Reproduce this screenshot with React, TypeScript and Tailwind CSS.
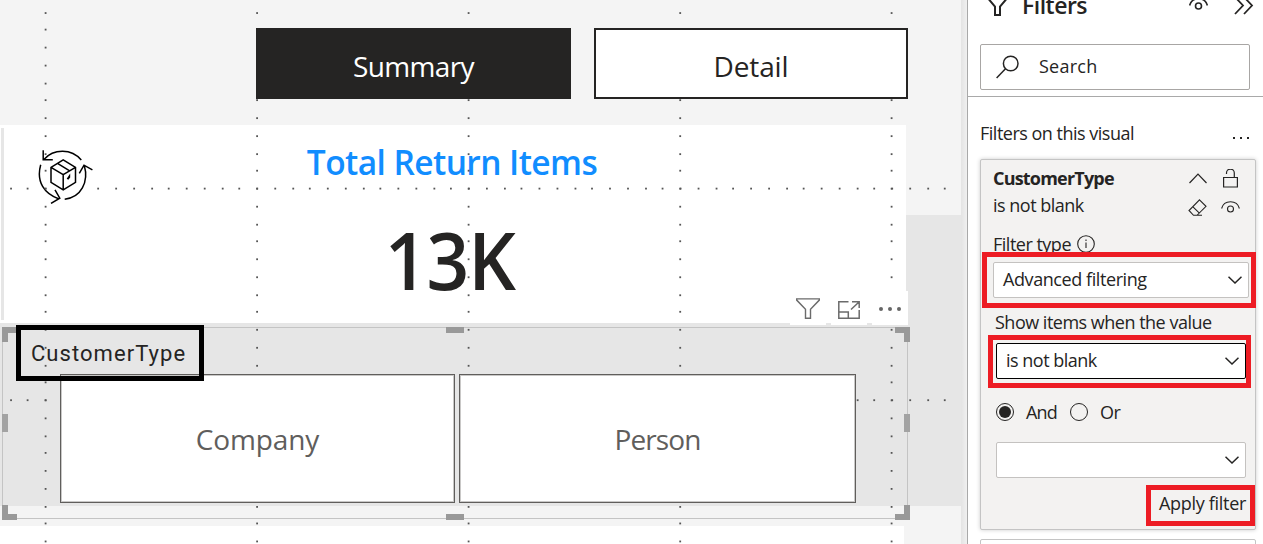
import React from "react";

const PERIOD = 70.55;
const spread = (start: number, end: number) =>
  Array.from({ length: 16 }, (_, k) => [0, 18, 36, 54].map((d) => start + PERIOD * (k - 1) + d))
    .flat()
    .filter((v) => v > 0 && v < end);

const dotRows = spread(29.7, 544);
const dotColumns = [45.7, 257.2, 468.7, 680.3, 891.7];
const dotSteps = spread(27.7, 950).filter((x) => x < 60 || x > 90);

function Dot({ x, y }: { x: number; y: number }) {
  return <rect x={x - 1} y={y - 1} width="1.8" height="1.8" fill="#555" />;
}

function GridDots() {
  return (
    <svg className="pointer-events-none absolute inset-0 z-10" width="961" height="544">
      {dotColumns.map((x) => dotRows.map((y) => <Dot key={`${x}-${y}`} x={x} y={y} />))}
      {[188.7, 400.3].map((y) => dotSteps.map((x) => <Dot key={`h${x}-${y}`} x={x} y={y} />))}
    </svg>
  );
}

function ReturnBoxIcon() {
  return (
    <svg width="56" height="56" viewBox="0.5 0 56 56" fill="none" stroke="#000" strokeWidth="1.5">
      <path d="M44.8 12A25 25 0 0 0 7.3 11.5M6.7 2.3v9.4h9.6" />
      <path d="M4.2 16.8C-.6 34 8 46 22.5 51M14.5 55.4l8.8-5.2-4.8-8.4" />
      <path d="M28.2 51.2C44.5 49.5 52.5 34 47.8 17.5M42.8 25.4l4.7-8.2 8.4 4.7" />
      <path d="M26.7 11.8l12.3 7.5v15l-12.3 7.5-12.2-7.5v-15zM14.5 19.3l12.2 7.3 12.3-7.3M26.7 26.6v15.2M21 15.3l12.2 7.6" />
      <path d="M31 31.2l1.7-2v-.5l-1.7 2.5" strokeWidth="2" />
    </svg>
  );
}

function Chevron({ up = false }: { up?: boolean }) {
  return up ? (
    <svg width="18" height="11" viewBox="0 0 18 11" fill="none" stroke="#252423" strokeWidth="1.2">
      <path d="M.5 10 9 1.2 17.5 10" />
    </svg>
  ) : (
    <svg width="14" height="8" viewBox="0 0 14 8" fill="none" stroke="#252423" strokeWidth="1.5">
      <path d="M.5.7 7 7 13.5.7" />
    </svg>
  );
}

function Eye({ bold = false }: { bold?: boolean }) {
  return (
    <svg width="19" height="12" viewBox="0 0 19 12" fill="none" stroke="#252423" strokeWidth={bold ? 1.6 : 1.1}>
      <path d="M.6 7.5C3-1.5 16-1.5 18.4 7.5" />
      <circle cx="9.5" cy="8" r="3" />
    </svg>
  );
}

function Select({ label, className }: { label?: string; className: string }) {
  return (
    <div className={`flex h-9 items-center justify-between rounded-[2px] border bg-white ${className}`}>
      <span className="pb-px">{label}</span>
      <Chevron />
    </div>
  );
}

function Handles() {
  return (
    <>
      <i className="absolute -left-px -top-px h-[15px] w-[15px] border-l-[6px] border-t-[6px] border-[#999]" />
      <i className="absolute -right-[3px] -top-px h-[15px] w-[15px] border-r-[6px] border-t-[6px] border-[#999]" />
      <i className="absolute -bottom-[2px] -left-px h-[15px] w-[15px] border-b-[6px] border-l-[6px] border-[#999]" />
      <i className="absolute -bottom-[2px] -right-[3px] h-[15px] w-[15px] border-b-[6px] border-r-[6px] border-[#999]" />
      <i className="absolute -top-px left-[443px] h-[6px] w-[18px] bg-[#999]" />
      <i className="absolute -bottom-[2px] left-[443px] h-[6px] w-[18px] bg-[#999]" />
      <i className="absolute -left-px top-[86px] h-[18px] w-[6px] bg-[#a3a3a3]" />
      <i className="absolute -right-[3px] top-[86px] h-[18px] w-[6px] bg-[#a3a3a3]" />
    </>
  );
}

function VisualToolbar() {
  return (
    <div className="absolute left-[790px] top-[291px] z-20 flex gap-[5px]">
      <div className="flex h-[34px] w-9 justify-center bg-white pt-[7px]">
        <svg width="24" height="21" viewBox="0 0 24 21" fill="none" stroke="#6b6b6b" strokeWidth="1.4">
          <path d="M.7.9h22.6v1.2L14.5 11.3v9H9.5v-9L.7 2.1z" />
        </svg>
      </div>
      <div className="flex h-[34px] w-9 justify-center bg-white pt-[10px]">
        <svg width="22" height="18" viewBox="0 0 22 18" fill="none" stroke="#6b6b6b" strokeWidth="1.5">
          <path d="M10.5.8H.8v16.4h20.4V9M14 .8h7.2V7M21 1 13 8.5M.8 11h9.5v6.2" />
        </svg>
      </div>
      <div className="flex h-[34px] w-9 items-center justify-center gap-[5px] bg-white pt-px">
        <i className="h-1 w-1 rounded-full bg-[#666]" />
        <i className="h-1 w-1 rounded-full bg-[#666]" />
        <i className="h-1 w-1 rounded-full bg-[#666]" />
      </div>
    </div>
  );
}

function ReportCanvas() {
  return (
    <main className="relative flex h-full w-[961px] shrink-0 flex-col overflow-hidden bg-[linear-gradient(to_bottom,#f4f4f4_215px,#e6e6e6_215px,#e6e6e6_506px,#f4f4f4_506px)]">
      <GridDots />
      <div className="relative z-20 ml-64 mt-7 flex gap-[23px] text-[28px] text-[#252423]">
        <button className="h-[71px] w-[315px] bg-[#252423] pt-1 leading-none tracking-[-0.65px] text-white">Summary</button>
        <button className="h-[71px] w-[314px] border-2 border-[#252423] bg-white pt-1 leading-none tracking-[-0.1px]">Detail</button>
      </div>

      <section className="mt-[26px] flex h-[198px] w-[906px] shrink-0 bg-white">
        <div className="ml-px mt-[3px] h-[192px] w-[3px] bg-[#e6e6e6]" />
        <div className="ml-[33px] mt-[23px] h-14 w-14">
          <ReturnBoxIcon />
        </div>
        <div className="flex w-[718px] flex-col items-center">
          <h1 className="mt-[13px] text-[33.5px] font-semibold leading-[48px] tracking-[-0.58px] text-[#118dff]">Total Return Items</h1>
          <div className="mt-[25px] scale-x-[0.935] pr-[4px] text-[80px] font-semibold leading-[96px] tracking-[-1px] text-[#252423]">13K</div>
        </div>
      </section>
      <VisualToolbar />

      <section className="relative ml-[2px] mt-1 h-[192px] w-[906px] shrink-0 border border-[#c4c4c4]">
        <Handles />
        <div className="relative z-30 ml-[13px] -mt-[3px] flex h-14 w-[188px] items-center border-[5px] border-black pl-[10px] font-['Roboto'] text-[22px] tracking-[1.05px] text-[#252423]">
          CustomerType
        </div>
        <div className="relative z-20 -mt-[7px] ml-[57px] flex gap-1 text-[28px] leading-none text-[#605e5c]">
          <div className="flex h-[129px] w-[395px] items-center justify-center border border-[#605e5c] bg-white tracking-[-0.1px] shadow-[inset_0_0_0_1px_#c9c8c7]">Company</div>
          <div className="flex h-[129px] w-[397px] items-center justify-center border border-[#605e5c] bg-white tracking-[-0.9px] shadow-[inset_0_0_0_1px_#c9c8c7]">Person</div>
        </div>
      </section>
      <div className="mt-[7px] h-[18px] w-[904px] shrink-0 bg-white" />
    </main>
  );
}

function FiltersPane() {
  return (
    <aside className="flex h-full w-[296px] shrink-0 flex-col overflow-hidden border-l border-[#a9a9a9] bg-white">
      <header className="flex h-[43px] shrink-0 items-start pl-5">
        <svg className="mt-[-3px]" width="20" height="20" viewBox="0 0 20 20" fill="none" stroke="#252423" strokeWidth="2">
          <path d="M1 1h17v1.5L12 9.5V18H7V9.5L1 2.5z" />
        </svg>
        <h2 className="ml-[14px] mt-[-11px] w-[140px] text-[23px] font-semibold leading-[32px] tracking-[-0.5px]">Filters</h2>
        <div className="ml-[27px] mt-[-2px]">
          <Eye bold />
        </div>
        <svg className="ml-[26px] mt-[-4px]" width="20" height="20" viewBox="0 0 20 20" fill="none" stroke="#252423" strokeWidth="1.8">
          <path d="M1 1l8 8.5L1 18M10 1l8 8.5-8 8.5" />
        </svg>
      </header>

      <div className="ml-3 mt-px flex h-[46px] w-[270px] shrink-0 items-center rounded-[2px] border border-[#a8a6a4] pl-[15px]">
        <svg width="23" height="24" viewBox="0 0 23 24" fill="none" stroke="#252423" strokeWidth="1.5">
          <circle cx="14.7" cy="8.5" r="7.3" />
          <path d="M9.5 13.8.6 23" />
        </svg>
        <span className="ml-5 pb-0.5 tracking-[0.25px]">Search</span>
      </div>
      <div className="mt-1.5 h-px shrink-0 bg-[#a9a9a9]" />

      <div className="ml-3 mt-[25px] flex h-6 w-[270px] shrink-0 items-center justify-between">
        <span className="pb-[2px] tracking-[-0.5px]">Filters on this visual</span>
        <span className="flex gap-[5px] pt-2">
          <i className="h-[2px] w-[2px] bg-[#252423]" />
          <i className="h-[2px] w-[2px] bg-[#252423]" />
          <i className="mr-px h-[2px] w-[2px] bg-[#252423]" />
        </span>
      </div>

      <section className="relative ml-3 mt-[13px] flex h-[371px] w-[276px] shrink-0 flex-col rounded-[2px] border border-[#c4c4c4] bg-[#f3f2f1] tracking-[-0.5px] shadow-[0_0_4px_rgba(0,0,0,0.2)]">
        <div className="ml-3 mr-[17px] mt-[5px] flex h-[27px] items-center">
          <b className="flex-1 tracking-[-0.8px]">CustomerType</b>
          <Chevron up />
          <svg className="ml-4" width="15" height="19" viewBox="0 0 15 19" fill="none" stroke="#252423" strokeWidth="1.2">
            <path d="M.6 8.5h13.8V18H.6zM3.5 5V4a3.9 3.9 0 0 1 7.8 0v4.5" />
          </svg>
        </div>
        <div className="ml-3 mr-[15px] flex h-[27px] items-center">
          <span className="flex-1">is not blank</span>
          <svg className="mt-1" width="19" height="17" viewBox="0 0 19 17" fill="none" stroke="#252423" strokeWidth="1.1">
            <path d="M11.5.8l6.5 6.5-9 9H5.5L1 11.5zM4.7 7.6l6.7 6.5M5.5 16.3H14" />
          </svg>
          <span className="ml-[14px] mt-0.5">
            <Eye />
          </span>
        </div>
        <div className="ml-3 mt-[13px] flex h-6 items-center">
          <span>Filter type</span>
          <svg className="ml-1.5" width="18" height="18" viewBox="0 0 18 18" fill="none" stroke="#252423" strokeWidth="1.1">
            <circle cx="9" cy="9" r="8.3" />
            <path d="M9 7.5V13M9 4.5V6" />
          </svg>
        </div>
        <div className="relative z-10 ml-px mt-[-4px] h-14 w-[274px] shrink-0 border-[5px] border-[#ed1c24] pl-[6px] pt-[5px] tracking-[-0.42px]">
          <Select label="Advanced filtering" className="w-64 border-[#c4c2c0] pl-[9px] pr-[6px]" />
        </div>
        <div className="ml-[14px] mt-[2px] flex h-[25px] items-center">Show items when the value</div>
        <div className="ml-[7px] h-[53px] w-[263px] shrink-0 border-[5px] border-[#ed1c24] pl-[3px] pt-[3px]">
          <Select label="is not blank" className="w-[250px] border-black pl-[9px] pr-[6px]" />
        </div>
        <div className="ml-[15px] mt-3 flex h-6 items-center">
          <span className="flex h-[18px] w-[18px] items-center justify-center rounded-full border border-[#252423]">
            <i className="h-3 w-3 rounded-full bg-[#252423]" />
          </span>
          <span className="ml-3 w-8 tracking-[-0.8px]">And</span>
          <span className="ml-3 h-[18px] w-[18px] rounded-full border border-[#252423]" />
          <span className="ml-3">Or</span>
        </div>
        <Select className="ml-[15px] mt-[18px] w-[250px] shrink-0 border-[#c4c2c0] pl-[9px] pr-[6px]" />
        <div className="ml-[165px] mt-[7px] flex h-[41px] w-[109px] shrink-0 items-center justify-end whitespace-nowrap border-[5px] border-[#ed1c24] pb-[5px] pr-1 tracking-[-0.3px]">
          Apply filter
        </div>
      </section>
      <div className="ml-3 mt-[9px] h-10 w-[276px] shrink-0 rounded-[2px] border border-[#c4c4c4] bg-white" />
    </aside>
  );
}

export default function App() {
  return (
    <div className="flex h-[544px] w-[1263px] overflow-hidden bg-white font-['Open_Sans','Noto_Sans',sans-serif] text-[18px] text-[#252423]">
      <ReportCanvas />
      <div className="h-full w-[6px] shrink-0 bg-gradient-to-r from-[#e4e4e4] to-[#f0f0f0]" />
      <FiltersPane />
    </div>
  );
}
